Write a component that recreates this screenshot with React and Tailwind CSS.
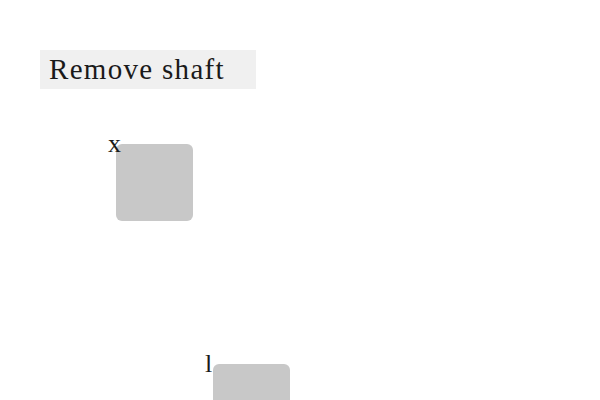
import React from 'react';

// Nodes placed on a free canvas: their position is the content itself
const nodes = [
  { label: 'x', left: 116, top: 144 },
  { label: 'l', left: 213, top: 364 },
];

const App = () => {
  return (
    <div
      className="relative w-[600px] h-[400px] overflow-hidden bg-white text-[#1a1a1a]"
      style={{ fontFamily: '"Liberation Serif", serif' }}
    >
      <div className="pt-[50px] pl-[40px]">
        <button className="w-[216px] h-[39px] bg-[#f0f0f0] text-left pl-[9px] text-[29px] leading-[39px] tracking-[1.3px] whitespace-nowrap">
          Remove shaft
        </button>
      </div>

      {nodes.map((n) => (
        <div key={n.label} className="absolute" style={{ left: n.left, top: n.top }}>
          <div className="w-[77px] h-[77px] rounded-[6px] bg-[#c8c8c8]" />
          <span className="absolute left-[-8px] top-[-13px] text-[26px] leading-[26px]">
            {n.label}
          </span>
        </div>
      ))}
    </div>
  );
};

export default App;
